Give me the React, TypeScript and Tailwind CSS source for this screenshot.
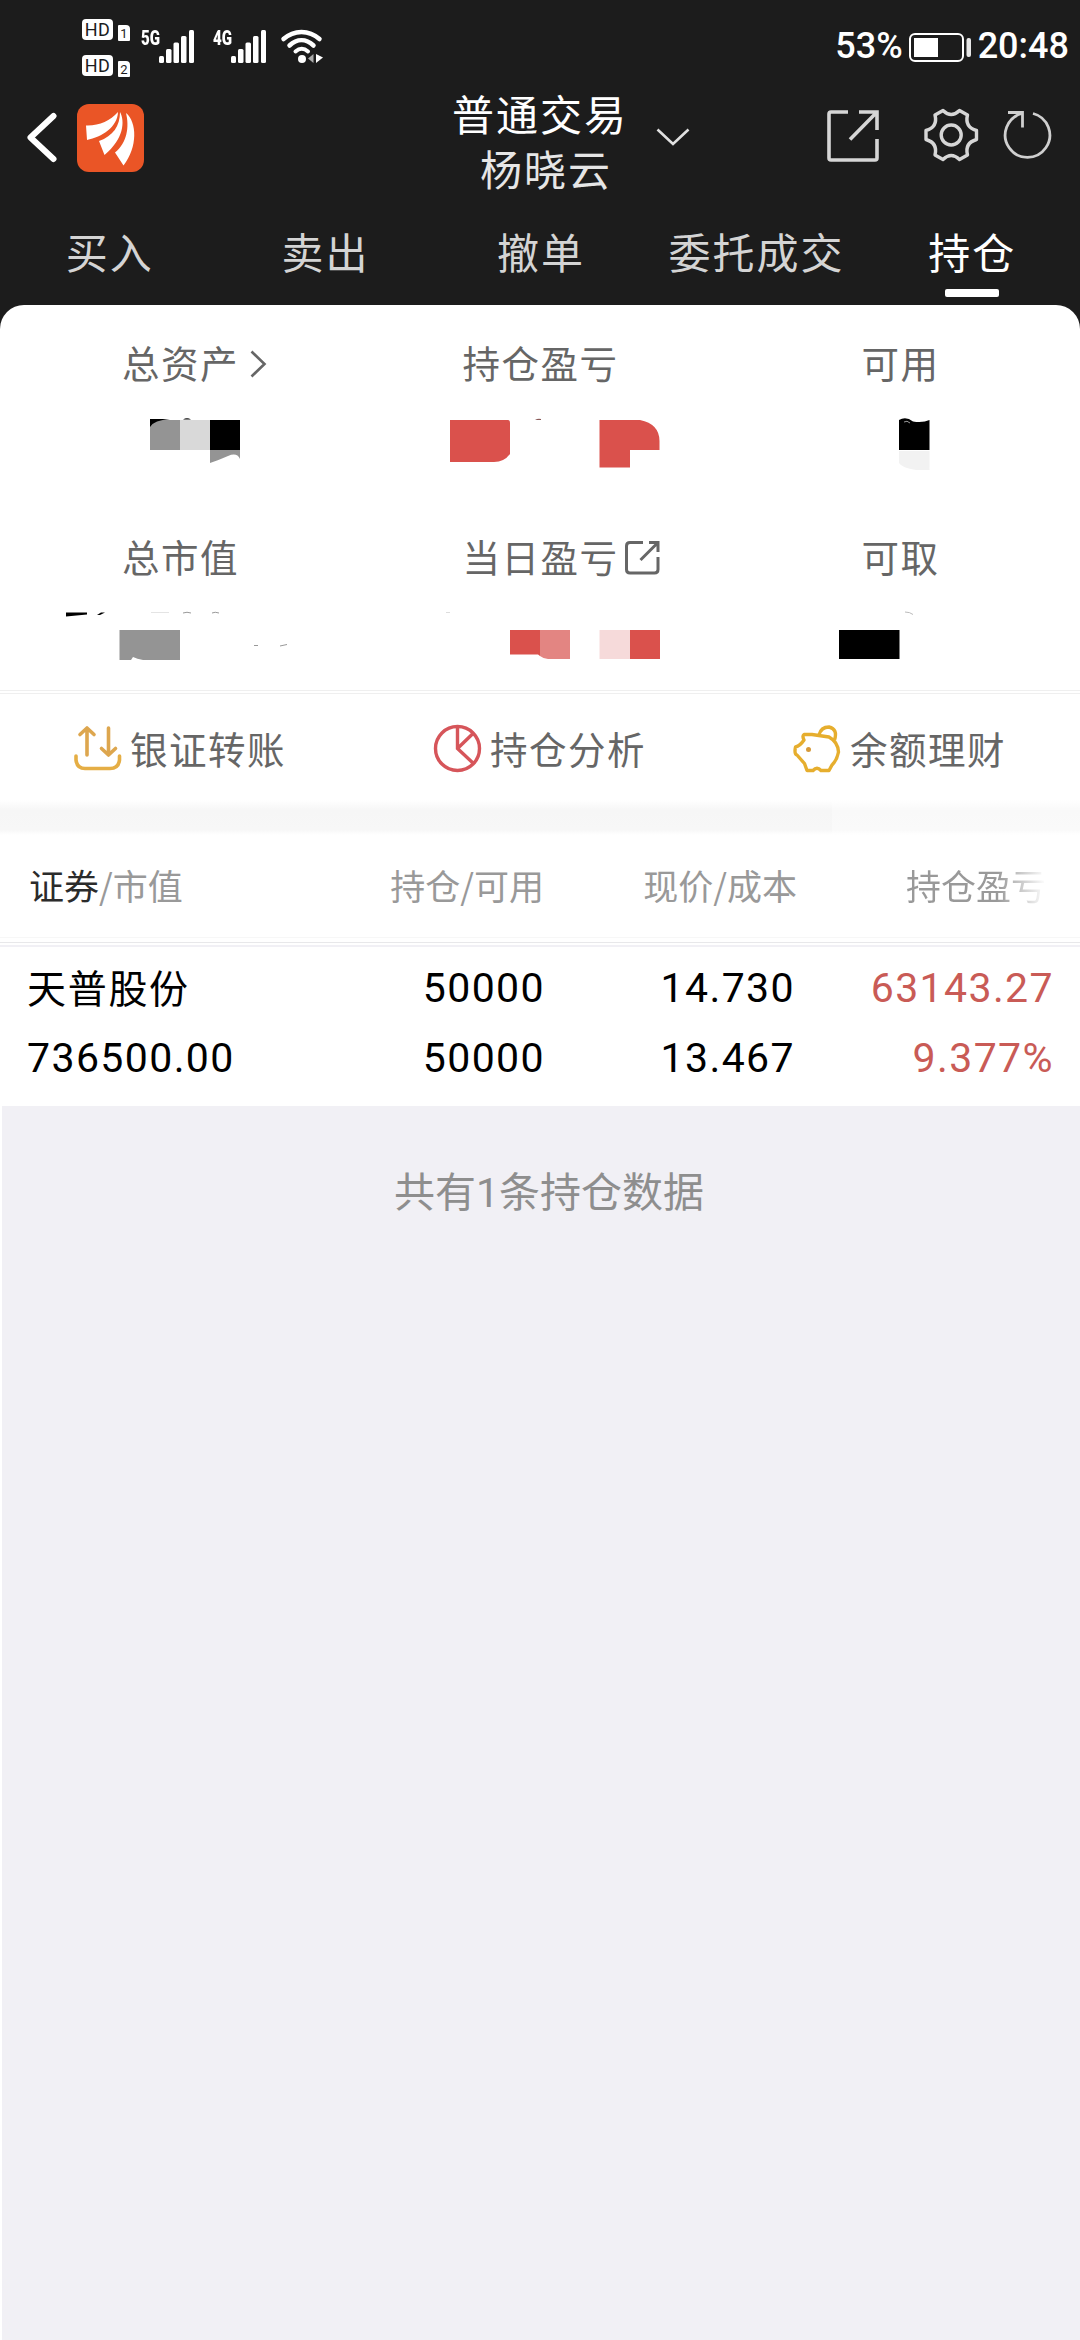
import { ReactNode } from 'react'

const TABS = ['买入', '卖出', '撤单', '委托成交', '持仓']

const HOLDINGS = [
	{
		name: '天普股份',
		value: '736500.00',
		amount: '50000',
		available: '50000',
		price: '14.730',
		cost: '13.467',
		profit: '63143.27',
		rate: '9.377%',
	},
]

export default function App() {
	return (
		<div className="flex h-[2340px] w-[1080px] flex-col overflow-hidden bg-[#1c1c1c] font-['Noto_Sans_CJK_SC',sans-serif]">
			<StatusBar />
			<Header />
			<Tabs />
			<main className="flex flex-1 flex-col overflow-hidden rounded-t-[24px] bg-white">
				<Summary />
				<div className="mt-[21px] h-1 border-y border-[#efefef]" />
				<Actions />
				<div className="flex h-[35px] bg-[linear-gradient(to_bottom,#ffffff,#f6f6f6_30%,#f7f7f7_85%,#ffffff)]">
					<div className="ml-auto w-[248px] bg-white/35" />
				</div>
				<Holdings />
			</main>
		</div>
	)
}

function StatusBar() {
	return (
		<div className="flex h-[92px] items-start text-white">
			<div className="mt-[19px] ml-[82px] flex flex-col gap-[14px]">
				<HdBadge sim="1" />
				<HdBadge sim="2" />
			</div>
			<Signal label="5G" className="ml-[11px]" />
			<Signal label="4G" className="ml-[18px]" />
			<svg className="mt-[28px] ml-[13px] h-9 w-[44px]" viewBox="0 0 44 36" fill="none" stroke="white">
				<path d="M3.500 11C14 1.500 29 1.500 39.500 11" strokeWidth="4.500" strokeLinecap="round" />
				<path d="M9.500 17.500C17 10.500 26 10.500 33.500 17.500" strokeWidth="4.500" strokeLinecap="round" />
				<path d="M15.500 23.500C19.500 20 24 20 28 23.500" strokeWidth="4" strokeLinecap="round" />
				<circle cx="22" cy="31" r="4" fill="white" stroke="none" />
				<path d="M33.500 26v9l-5.500-4.500z" fill="#aaaaaa" stroke="none" />
				<path d="M36 26l7 3.500-7 5.500z" fill="white" stroke="none" />
			</svg>
			<div className="mr-[11px] ml-auto flex items-start font-[Roboto,sans-serif] text-[36px] leading-[42px] font-medium">
				<span className="mt-[25px]">53%</span>
				<svg className="mt-[32px] ml-[5px] h-[31px] w-[64px]" viewBox="0 0 64 31">
					<rect x="2" y="2" width="53" height="27" rx="5" fill="none" stroke="white" strokeWidth="2" />
					<rect x="6" y="6" width="24" height="19" fill="white" />
					<rect x="58.500" y="6" width="4.500" height="19" rx="2" fill="#e6e6e6" />
				</svg>
				<span className="mt-[25px] ml-[6px]">20:48</span>
			</div>
		</div>
	)
}

function HdBadge({ sim }: { sim: string }) {
	return (
		<div className="flex h-[22px] items-end gap-[5px] text-[#1c1c1c]">
			<span className="mb-[1px] flex h-[21px] w-[31px] items-center justify-center rounded-[4px] bg-white font-[Roboto,sans-serif] text-[18px] leading-none tracking-[0.5px]">
				HD
			</span>
			<span className="flex h-4 w-3 items-center justify-center rounded-[1px] rounded-tr-[4px] bg-white font-[Roboto,sans-serif] text-[13px] leading-none">
				{sim}
			</span>
		</div>
	)
}

function Signal({ label, className }: { label: string; className: string }) {
	return (
		<div className={`mt-[30px] flex h-[34px] items-start ${className}`}>
			<span className="w-[18px] origin-left scale-x-[0.72] font-[Roboto,sans-serif] text-[21px] leading-[16px] font-black">
				{label}
			</span>
			<svg className="h-[34px] w-[36px]" viewBox="0 0 36 34" fill="white">
				<rect x="0" y="26" width="5" height="7" rx="1.500" />
				<rect x="7" y="19" width="5.500" height="14" rx="1.500" />
				<rect x="14.500" y="12.500" width="5.500" height="20.500" rx="1.500" />
				<rect x="22" y="6" width="5.500" height="27" rx="1.500" />
				<rect x="30" y="0" width="5" height="33" rx="1.500" />
			</svg>
		</div>
	)
}

function Header() {
	return (
		<header className="flex h-[116px] items-start">
			<svg className="mt-[20px] ml-[26px] h-[52px] w-[32px]" viewBox="0 0 32 52" fill="none" stroke="white">
				<path d="M27.500 4L4.500 25.500L27.500 47" strokeWidth="6" strokeLinecap="round" strokeLinejoin="round" />
			</svg>
			<Logo />
			<div className="mt-[-7px] ml-[308px] w-[176px] text-center text-[42px] leading-[55px] tracking-[2px] whitespace-nowrap text-white">
				<p>普通交易</p>
				<p className="pl-[12px] text-[#e6e6e6]">杨晓云</p>
			</div>
			<svg className="mt-[34px] ml-[27px] h-[22px] w-[36px]" viewBox="0 0 36 22" fill="none" stroke="#e0e0e0">
				<path d="M2.500 3.500L18 18L33.500 3.500" strokeWidth="2.600" />
			</svg>
			{/* share */}
			<svg className="mt-[16px] ml-[134px] h-[56px] w-[56px]" viewBox="825 108 56 56" fill="none" stroke="#d6d6d6" strokeWidth="3.600">
				<path d="M848 112H831Q829 112 829 114V158Q829 160 831 160H875Q877 160 877 158V139" />
				<path d="M859 112H877V130M877 112L850 139.500" />
			</svg>
			{/* settings */}
			<svg className="mt-[14px] ml-[41px] h-[58px] w-[58px]" viewBox="922 106 58 58" fill="none" stroke="#d6d6d6" strokeWidth="3.400" strokeLinejoin="round">
				<path d="M943 110.500Q951.200 118.500 959.500 110.500L967.500 115Q964.500 127 976.500 130.500V139.500Q964.500 143 967.500 155L959.500 159.500Q951.200 151.500 943 159.500L935 155Q938 143 926 139.500V130.500Q938 127 935 115Z" />
				<circle cx="951.200" cy="135" r="10" />
			</svg>
			{/* refresh */}
			<svg className="mt-[16px] ml-[22px] h-[54px] w-[52px]" viewBox="1002 108 52 54" fill="none" stroke="#cfcfcf" strokeWidth="2.800">
				<path d="M1033 113.500A22.300 22.300 0 1 1 1022 113.500" />
				<path d="M1008 112.500H1022.500V127.500" />
			</svg>
		</header>
	)
}

function Logo() {
	return (
		<svg className="mt-[12px] ml-[19px] h-[68px] w-[67px]" viewBox="77 104 67 68">
			<rect x="77" y="104" width="67" height="68" rx="12" fill="#ea5526" />
			<g fill="white">
				<path d="M86 125.500C99 126 110 121 118 112C117.500 127 102 137 87 140Z" />
				<path d="M120 112C125 121 124 139 104.500 155L99 141C113 136 120 126 120 112Z" />
				<path d="M126 113C137 122 138 147 123.500 165.500L115 152.500C127 143 129.500 127 126 113Z" />
			</g>
		</svg>
	)
}

function Tabs() {
	return (
		<nav className="grid h-[97px] grid-cols-5 pl-[2px] text-[42px] leading-[86px] tracking-[2px] text-[#d4d4d4]">
			{TABS.map((tab) =>
				tab === '持仓' ? (
					<div key={tab} className="flex flex-col items-center text-white">
						<span className="h-[81px]">{tab}</span>
						<span className="h-2 w-[54px] rounded-[2px] bg-white" />
					</div>
				) : (
					<span key={tab} className="text-center whitespace-nowrap">
						{tab}
					</span>
				),
			)}
		</nav>
	)
}

function Label({ children, icon }: { children: ReactNode; icon?: ReactNode }) {
	return (
		<div className="flex h-[60px] items-center justify-center pl-[1px] text-[37.500px] leading-[60px] tracking-[1.500px] text-[#666666]">
			<span>{children}</span>
			{/* zero width, so that the label itself stays centred */}
			<span className="w-0">{icon}</span>
		</div>
	)
}

function Summary() {
	return (
		<section className="pt-[27px]">
			<div className="grid grid-cols-3">
				<Label
					icon={
						<svg className="mt-1 ml-[10px] h-[30px] w-[20px]" viewBox="0 0 20 30" fill="none" stroke="#666666">
							<path d="M2.500 2.500L15.500 15L2.500 27.500" strokeWidth="2.600" />
						</svg>
					}
				>
					总资产
				</Label>
				<Label>持仓盈亏</Label>
				<Label>可用</Label>
			</div>
			{/* masked amounts */}
			<div className="mt-[21px] grid h-16 grid-cols-3">
				<svg className="h-16 w-[360px]" viewBox="0 413 360 64">
					<path d="M150 420H180V450H150Z" fill="#949494" />
					<path d="M150 419H170Q154 420 150 427Z" />
					<path d="M183 419.500Q187 417 191 419.500Z" />
					<path d="M180 420H210V450H180Z" fill="#d9d9d9" />
					<path d="M210 420H240V450H210Z" />
					<path d="M210 450H240V459Q237 452 228 456Q219 460 210 463Z" fill="#949494" />
				</svg>
				<svg className="h-16 w-[360px]" viewBox="360 413 360 64" fill="#da514c">
					<path d="M450 420H508Q510 420 510 423V454Q504 462 494 462H450Z" />
					<path d="M535 420Q538 418 541 419V420Z" fill="#8a5a58" />
					<path d="M599.500 420H640Q659.500 424 659.500 441V450H630V467.500H599.500Z" />
				</svg>
				<svg className="h-16 w-[360px]" viewBox="720 413 360 64">
					<path d="M899 420Q906 416 913 421.500Q923 423 929.500 420V450H899Z" />
					<path d="M904 422Q907 420 910 423" fill="none" stroke="#999999" />
					<path d="M899 451H929.500V470H916Q902 468 899 463Z" fill="#f2f2f2" />
				</svg>
			</div>

			<div className="mt-[49px] grid grid-cols-3">
				<Label>总市值</Label>
				<Label
					icon={
						<svg className="mt-[4px] ml-[5px] h-9 w-9" viewBox="0 0 36 36" fill="none" stroke="#666666" strokeWidth="3">
							<path d="M19 2.500H6Q2.500 2.500 2.500 6V29.500Q2.500 33 6 33H30.500Q34 33 34 29.500V17" />
							<path d="M25 2.500H34V12M34 2.500L16.500 20" />
						</svg>
					}
				>
					当日盈亏
				</Label>
				<Label>可取</Label>
			</div>
			<div className="mt-[19px] grid h-16 grid-cols-3">
				<svg className="h-16 w-[360px]" viewBox="0 605 360 64">
					<path d="M66 612.500H87V614.500L66 616.500Z" />
					<path d="M97 615L101 612.500H105L100 615Z" />
					<path d="M151 612.500H169" stroke="#e4e4e4" />
					<path d="M183 613Q187 611.500 191 613M212 613Q215 611.500 219 613M254 645.500H258M280 646L287 644.500" fill="none" stroke="#999999" />
					<path d="M119.500 630H180V660H143Q137 659 133 657L131 660H119.500Z" fill="#949494" />
				</svg>
				<svg className="h-16 w-[360px]" viewBox="360 605 360 64" fill="#da514c">
					<path d="M446 612.500H450" stroke="#dddddd" />
					<path d="M510 630H540V656L538 654.500H510Z" />
					<path d="M540 630H570V659H548Q543 658.500 540 656Z" fill="#e38582" />
					<path d="M599.500 630H630V659H599.500Z" fill="#f6dada" />
					<path d="M630 630H660V659H630Z" />
				</svg>
				<svg className="h-16 w-[360px]" viewBox="720 605 360 64">
					<path d="M905 612Q910 612 913 614.500" fill="none" stroke="#bbbbbb" />
					<path d="M839 630H899.500V659H839Z" />
				</svg>
			</div>
		</section>
	)
}

function Actions() {
	return (
		<section className="grid h-[106px] grid-cols-3 text-[37.500px] leading-[107px] tracking-[1.500px] text-[#666666]">
			<div className="flex items-start pl-[72px]">
				<svg className="mt-[28px] h-[54px] w-[52px]" viewBox="72 730 52 54" fill="none" stroke="#dda64e" strokeWidth="3.600" strokeLinecap="round" strokeLinejoin="round">
					<path d="M87 763V736M80 742.500L87 736L94 742.500" />
					<path d="M108.500 736V763M101.500 756.500L108.500 763L115.500 756.500" />
					<path d="M76 764V768Q77 776.500 85 776.500H110Q118.500 776.500 119.500 768V764" stroke="#e5ae45" />
				</svg>
				<span className="ml-[6px]">银证转账</span>
			</div>
			<div className="flex items-start pl-[72px]">
				<svg className="mt-[28px] h-[54px] w-[52px]" viewBox="432 730 52 54" fill="none" stroke="#d6555a" strokeWidth="3.400">
					<circle cx="457.500" cy="756.500" r="22" />
					<path d="M457.500 735V756.500L473.500 771.500M457.500 756.500L473 741.500" />
				</svg>
				<span className="ml-[6px]">持仓分析</span>
			</div>
			<div className="flex items-start pl-[72px]">
				<svg className="mt-[28px] h-[54px] w-[52px]" viewBox="792 730 52 54" fill="none" stroke="#e6ae2e" strokeWidth="3.400" strokeLinejoin="round">
					<path d="M804 742.500L812 742.500L829 745Q838 750 838.500 760Q837 768 832 773L829 778.500H821Q817 774 813 778.500H807L804.500 771.500L797 763Q794 762 795.500 755Q800 754 804 748Q802 744 804 742.500Z" />
					<path d="M819 743Q821 735 829 735Q838 737 834.500 748" />
					<circle cx="808.500" cy="757.500" r="2.500" fill="#d69a3a" stroke="none" />
				</svg>
				<span className="ml-[6px]">余额理财</span>
			</div>
		</section>
	)
}

function Holdings() {
	return (
		<section className="flex flex-1 flex-col">
			<div className="flex h-[102px] pl-[29px] text-[35px] leading-[100px] whitespace-nowrap text-[#999999]">
				<span className="w-[280px]">
					<span className="text-[#2b2b2b]">证券</span>/市值
				</span>
				<span className="w-[235px] text-right">持仓/可用</span>
				<span className="w-[253px] text-right">现价/成本</span>
				<span className="ml-[109px] w-[140px] bg-linear-to-r from-[#999999] from-65% to-white bg-clip-text text-transparent">
					持仓盈亏
				</span>
			</div>
			<div className="h-[5px] border-t border-[#f7f7f7]" />
			<div className="h-[5px] border-t border-b-2 border-t-[#e8e8ea] border-b-[#f1f0f5]" />
			{HOLDINGS.map((item) => (
				<div
					key={item.name}
					className="grid h-[159px] grid-cols-[289px_229px_250px_259px] grid-rows-[70px_70px] pt-[6px] pl-[27px] text-right font-[Roboto,'Noto_Sans_CJK_SC',sans-serif] text-[41px] leading-[70px] tracking-[1.400px] text-black"
				>
					<span className="mt-[-2px] text-left font-['Noto_Sans_CJK_SC',sans-serif] text-[39px] tracking-[1.700px]">{item.name}</span>
					<span>{item.amount}</span>
					<span>{item.price}</span>
					<span className="text-[#c95b56]">{item.profit}</span>
					<span className="text-left">{item.value}</span>
					<span>{item.available}</span>
					<span>{item.cost}</span>
					<span className="text-[#c95b56]">{item.rate}</span>
				</div>
			))}
			<div className="ml-[2px] flex-1 bg-[#f1f0f5] pt-[51px] pl-[16px] text-center text-[41px] leading-[64px] text-[#8e8e8e]">
				共有<span className="font-[Roboto,sans-serif]">{HOLDINGS.length}</span>条持仓数据
			</div>
		</section>
	)
}
